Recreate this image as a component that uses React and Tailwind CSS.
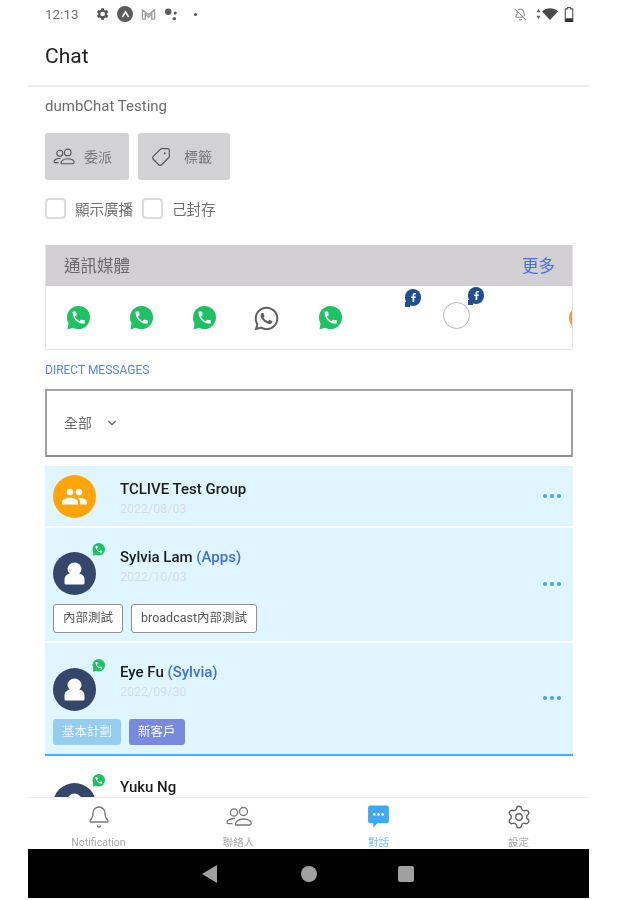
import React from "react";
import { FaWhatsapp, FaFacebookF } from "react-icons/fa";
import { MdPeople } from "react-icons/md";
import { Tag, Bell, Settings, BellOff, ChevronDown } from "lucide-react";

const FONT = "font-['Roboto','Noto_Sans_CJK_TC',sans-serif]";

function Wa({ className }) {
  return (
    <svg viewBox="0 0 24 24" className={className}>
      <circle cx="12.500" cy="11.500" r="11.500" fill="#1fc262" />
      <path d="M1.500 23.500 L3 15 L9 21z" fill="#1fc262" />
      <path
        transform="translate(4.500 3.500) scale(0.68)"
        d="M6.600 10.800c1.400 2.800 3.800 5.100 6.600 6.600l2.200-2.200c.3-.3.700-.4 1-.2 1.100.4 2.300.6 3.600.6.6 0 1 .4 1 1V20c0 .6-.4 1-1 1C10.600 21 3 13.400 3 4c0-.6.4-1 1-1h3.500c.6 0 1 .4 1 1 0 1.300.2 2.500.6 3.600.1.300 0 .7-.2 1z"
        fill="#fff"
      />
    </svg>
  );
}

function People({ className }) {
  return (
    <svg viewBox="0 0 26 24" className={className} fill="none" stroke="currentColor" strokeWidth="1.300" strokeLinejoin="round" strokeLinecap="round">
      <circle cx="8" cy="7.500" r="3.600" />
      <circle cx="17.500" cy="6.500" r="4" />
      <path d="M9.500 20c-.5-3.500 3-6 8-6s8.500 2.500 7.500 5c-.2.600-.7 1-1.300 1z" />
      <path d="M8.500 13.500c-4 0-7.500 1.700-7.500 4 0 .8.500 1.200 1.300 1.200H6" />
    </svg>
  );
}

function Fb({ className }) {
  return (
    <span className={"absolute w-[16px] h-[18px] " + className}>
      <span className="absolute left-0 top-0 w-[16px] h-[17px] rounded-full bg-[#1d4f91] flex items-center justify-center">
        <FaFacebookF className="w-[9px] h-[9px] text-white" />
      </span>
      <span className="absolute left-0 bottom-0 w-[5px] h-[5px] bg-[#1d4f91]" />
    </span>
  );
}

function Slot({ children }) {
  return <div className="relative w-[63px] shrink-0 flex justify-center items-center h-[26px]">{children}</div>;
}

function Person() {
  return (
    <svg viewBox="0 0 43 43" className="w-[43px] h-[43px]">
      <circle cx="21.500" cy="21.500" r="21.500" fill="#34466a" />
      <ellipse cx="21.500" cy="17" rx="7" ry="6.500" fill="#fff" />
      <path d="M11.500 31 v-3.500 c0-4.500 4-6.500 10-6.500 s10 2 10 6.500 V31 a1.500 1.500 0 0 1-1.500 1.500 H13 a1.500 1.500 0 0 1-1.500-1.500z" fill="#fff" />
    </svg>
  );
}

function Avatar() {
  return (
    <div className="relative w-[43px] h-[43px] shrink-0">
      <Person />
      <Wa className="absolute left-[39px] top-[-9px] w-[13px] h-[13px]" />
    </div>
  );
}

function Row({ children, className = "" }) {
  return <div className={"relative bg-[#dff5ff] px-[8px] " + className}>{children}</div>;
}

function Dots({ className }) {
  return (
    <span className={"absolute right-[12px] flex gap-[3px] " + className}>
      <i className="w-[4px] h-[4px] rounded-full bg-[#3ba4f0]" />
      <i className="w-[4px] h-[4px] rounded-full bg-[#3ba4f0]" />
      <i className="w-[4px] h-[4px] rounded-full bg-[#3ba4f0]" />
    </span>
  );
}

function NameBlock({ name, who, date }) {
  return (
    <div className="ml-[24px] flex flex-col">
      <div className="text-[15px] leading-[20px] font-medium text-[#1c1c1c]">
        {name} {who && <span className="text-[#3f6fdc]">({who})</span>}
      </div>
      {date && <div className="text-[12.500px] leading-[20px] text-[#d6dde2]">{date}</div>}
    </div>
  );
}

function Tab({ icon, label, active }) {
  return (
    <div className="flex flex-col items-center w-[140px]">
      <div className="h-[30px] mt-[4px] flex items-center justify-center">{icon}</div>
      <div className={"text-[10.500px] leading-[12px] mt-[6px] " + (active ? "text-[#7cc0e8]" : "text-[#a8a8a8]")}>{label}</div>
    </div>
  );
}

export default function App() {
  return (
    <div className={"w-[617px] h-[900px] bg-white overflow-hidden blur-[0.5px] " + FONT}>
      <div className="ml-[28px] w-[561px] h-[898px] flex flex-col bg-white">
        {/* status bar */}
        <div className="h-[28px] shrink-0 flex items-center pl-[17px] pr-[15px] text-[#666]">
          <span className="text-[13.500px] w-[49px] text-[#707070]">12:13</span>
          <svg viewBox="0 0 24 24" className="w-[16px] h-[16px]" fill="#555">
            <path d="M19.400 13a7.500 7.500 0 0 0 0-2l2.100-1.600-2-3.500-2.500 1a7.600 7.600 0 0 0-1.700-1L15 3.200h-4l-.4 2.700a7.600 7.600 0 0 0-1.700 1l-2.500-1-2 3.500L6.500 11a7.500 7.500 0 0 0 0 2l-2.100 1.600 2 3.500 2.500-1a7.600 7.600 0 0 0 1.700 1l.4 2.700h4l.4-2.700a7.600 7.600 0 0 0 1.700-1l2.500 1 2-3.500zM13 15.500a3.500 3.500 0 1 1 0-7 3.500 3.500 0 0 1 0 7z" />
          </svg>
          <span className="ml-[7px] w-[16px] h-[16px] rounded-full bg-[#5c5c5c] flex items-center justify-center">
            <svg viewBox="0 0 10 10" className="w-[9px] h-[9px]" fill="none" stroke="#fff" strokeWidth="1.800"><path d="M1.500 8 L5 2 L8.500 8" /></svg>
          </span>
          <svg viewBox="0 0 16 14" className="w-[15px] h-[13px] ml-[8px]" fill="none" stroke="#a0a0a0" strokeWidth="1.500">
            <path d="M1.500 2v10h3V6.500L8 10l3.500-3.500V12h3V2L8 7z" />
          </svg>
          <svg viewBox="0 0 16 14" className="w-[15px] h-[13px] ml-[8px]" fill="#5c5c5c">
            <circle cx="4.500" cy="4" r="3.500" /><circle cx="12" cy="5.500" r="1.700" /><circle cx="11" cy="11.500" r="1.900" />
          </svg>
          <span className="w-[3px] h-[3px] rounded-full bg-[#555] ml-[15px]" />
          <span className="flex-1" />
          <BellOff className="w-[13px] h-[13px] text-[#8a8a8a]" strokeWidth={2} />
          <svg viewBox="0 0 6 12" className="w-[5px] h-[10px] ml-[9px]" fill="#666"><path d="M3 0l2.500 4h-5zM3 12L.5 8h5z" /></svg>
          <svg viewBox="0 0 16 12" className="w-[16px] h-[12px] ml-[1px]" fill="#4a4a4a"><path d="M8 12L0 3.500C4.500-.8 11.500-.8 16 3.500z" /></svg>
          <svg viewBox="0 0 10 16" className="w-[10px] h-[15px] ml-[6px]" fill="none"><path d="M3.500 0.500h3v1.500h2.500v13.500h-8V2h2.500z" stroke="#555" strokeWidth="1.200" /><rect x="1" y="12" width="8" height="4" fill="#333" /></svg>
        </div>

        {/* title */}
        <div className="h-[59px] shrink-0 flex items-center pl-[17px] border-b-2 border-[#ececec]">
          <span className="text-[21px] text-[#222]">Chat</span>
        </div>

        {/* scrollable */}
        <div className="flex-1 min-h-0 overflow-hidden pl-[17px] pr-[16px]">
          <div className="text-[15px] leading-[20px] text-[#6c6c6c] mt-[9px]">dumbChat Testing</div>

          <div className="flex gap-[9px] mt-[17px]">
            <div className="w-[84px] h-[47px] rounded-[3px] bg-[#d2d2d4] flex items-center text-[#777]">
              <People className="w-[22px] h-[20px] ml-[8px] text-[#555]" />
              <span className="text-[14px] ml-[9px] mt-[2px]">委派</span>
            </div>
            <div className="w-[92px] h-[47px] rounded-[3px] bg-[#d2d2d4] flex items-center text-[#777]">
              <Tag className="w-[20px] h-[20px] ml-[13px] text-[#555] -scale-x-100" strokeWidth={1.400} />
              <span className="text-[14px] ml-[13px] mt-[2px]">標籤</span>
            </div>
          </div>

          <div className="flex items-center mt-[17px] h-[22px] text-[14.500px] text-[#6f6f6f]">
            <span className="w-[21px] h-[21px] rounded-[4px] border-2 border-[#dcdcdc]" />
            <span className="ml-[9px] w-[58px] mt-[6px]">顯示廣播</span>
            <span className="ml-[9px] w-[21px] h-[21px] rounded-[4px] border-2 border-[#dcdcdc]" />
            <span className="ml-[9px] mt-[6px]">己封存</span>
          </div>

          {/* channels card */}
          <div className="mt-[26px] h-[105px] border border-t-0 border-[#e4e4e6] rounded-b-[2px] overflow-hidden">
            <div className="h-[41px] -mx-[1px] bg-[#d2d0d3] flex items-center justify-between pl-[19px] pr-[18px]">
              <span className="text-[16.500px] text-[#6a6a6a] mt-[4px]">通訊媒體</span>
              <span className="text-[16.500px] text-[#4a6fd8] mt-[4px]">更多</span>
            </div>
            <div className="flex mt-[19px]">
              <Slot><Wa className="w-[24px] h-[24px]" /></Slot>
              <Slot><Wa className="w-[24px] h-[24px]" /></Slot>
              <Slot><Wa className="w-[24px] h-[24px]" /></Slot>
              <Slot><FaWhatsapp className="w-[27px] h-[27px] text-[#5f5f5f]" /></Slot>
              <Slot><Wa className="w-[24px] h-[24px]" /></Slot>
              <Slot><Fb className="left-[44px] top-[-16px]" /></Slot>
              <Slot>
                <span className="w-[27px] h-[27px] rounded-full border border-[#b5b5b5] -mt-[5px] ml-[1px]" />
                <Fb className="left-[44px] top-[-18px]" />
              </Slot>
              <Slot />
              <Slot><span className="w-[26px] h-[26px] rounded-full border-[3px] border-[#f39a3e]" /></Slot>
            </div>
          </div>

          <div className="text-[12px] leading-[14px] text-[#5c82dc] mt-[13px]">DIRECT MESSAGES</div>

          <div className="mt-[12px] h-[68px] border-2 border-[#a2a2a2] border-b-[#8f8f8f] rounded-[1px] flex items-center pl-[17px] text-[14px] text-[#6c6c6c]">
            <span>全部</span>
            <ChevronDown className="w-[14px] h-[14px] ml-[13px] text-[#666]" strokeWidth={2} />
          </div>

          {/* list */}
          <div className="mt-[9px] flex flex-col">
            <Row className="h-[60px] flex items-center">
              <span className="w-[43px] h-[43px] rounded-full bg-[#ffa50a] flex items-center justify-center shrink-0">
                <MdPeople className="w-[27px] h-[27px] text-white" />
              </span>
              <div className="mt-[5px]"><NameBlock name="TCLIVE Test Group" date="2022/08/03" /></div>
              <Dots className="top-[28px]" />
            </Row>

            <Row className="h-[113px] mt-[2px]">
              <div className="flex items-center pt-[24px]">
                <Avatar />
                <div className="-mt-[14px]"><NameBlock name="Sylvia Lam" who="Apps" date="2022/10/03" /></div>
              </div>
              <div className="flex gap-[8px] mt-[9px]">
                <span className="h-[29px] px-[9px] rounded-[3px] border border-[#8f8f8f] bg-white text-[12.500px] text-[#555] flex items-center">內部測試</span>
                <span className="h-[29px] px-[9px] rounded-[3px] border border-[#8f8f8f] bg-white text-[12.500px] text-[#555] flex items-center">broadcast內部測試</span>
              </div>
              <Dots className="top-[54px]" />
            </Row>

            <Row className="h-[113px] mt-[2px] border-b-2 border-[#4aaef0]">
              <div className="flex items-center pt-[25px]">
                <Avatar />
                <div className="-mt-[16px]"><NameBlock name="Eye Fu" who="Sylvia" date="2022/09/30" /></div>
              </div>
              <div className="flex gap-[8px] mt-[8px]">
                <span className="h-[26px] px-[9px] rounded-[3px] bg-[#95cdf0] text-[12.500px] text-white/80 flex items-center">基本計劃</span>
                <span className="h-[26px] px-[9px] rounded-[3px] bg-[#7a89db] text-[12.500px] text-white flex items-center">新客戶</span>
              </div>
              <Dots className="top-[53px]" />
            </Row>

            <div className="h-[113px] px-[8px] pt-[27px] bg-white flex items-start">
              <Avatar />
              <div className="-mt-[6px]"><NameBlock name="Yuku Ng" /></div>
            </div>
          </div>
        </div>

        {/* bottom tabs */}
        <div className="h-[52px] shrink-0 border-t border-[#eeeeee] bg-white flex justify-center overflow-hidden">
          <Tab icon={<Bell className="w-[24px] h-[24px] text-[#777]" strokeWidth={1.300} />} label="Notification" />
          <Tab icon={<People className="w-[26px] h-[24px] text-[#777]" />} label="聯絡人" />
          <Tab
            active
            icon={
              <svg viewBox="0 0 24 24" className="w-[25px] h-[25px]">
                <path d="M2 3.500a2 2 0 0 1 2-2h16a2 2 0 0 1 2 2v13a2 2 0 0 1-2 2h-9l-4 4v-4H4a2 2 0 0 1-2-2z" fill="#3fa9f5" />
                <circle cx="8" cy="10" r="1.300" fill="#fff" /><circle cx="12" cy="10" r="1.300" fill="#fff" /><circle cx="16" cy="10" r="1.300" fill="#fff" />
              </svg>
            }
            label="對話"
          />
          <Tab icon={<Settings className="w-[26px] h-[26px] text-[#666]" strokeWidth={1.300} />} label="設定" />
        </div>

        {/* nav bar */}
        <div className="h-[49px] shrink-0 bg-black flex items-center">
          <span className="ml-[174px] w-0 h-0 border-y-[9px] border-y-transparent border-r-[15px] border-r-[#a0a0a0]" />
          <span className="ml-[84px] w-[16px] h-[16px] rounded-full bg-[#a0a0a0]" />
          <span className="ml-[81px] w-[16px] h-[16px] rounded-[2px] bg-[#a0a0a0]" />
        </div>
      </div>
    </div>
  );
}
